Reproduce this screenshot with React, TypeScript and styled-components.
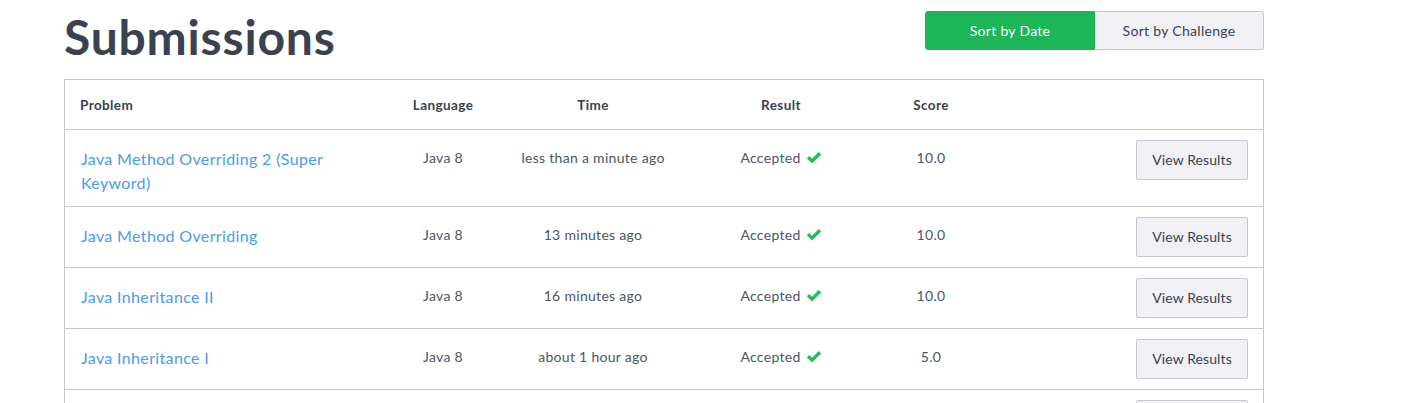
import React from "react";
import styled, { createGlobalStyle } from "styled-components";

const Global = createGlobalStyle`
  html, body { margin: 0; padding: 0; background: #fff; }
  body { font-family: Lato, "Open Sans", sans-serif; color: #39424e; }
  * { box-sizing: border-box; }
`;

const Page = styled.div`
  padding-left: 64px;
  width: 1264px;
`;

const Header = styled.div`
  display: flex;
  justify-content: space-between;
  align-items: flex-start;
  height: 79px;
`;

const Title = styled.h1`
  margin: 0;
  padding: 9px 0 0 0;
  font-size: 48px;
  line-height: 56px;
  font-weight: 700;
  letter-spacing: 0.8px;
  color: #39424e;
`;

const Toggle = styled.div`
  display: flex;
  margin-top: 11px;
`;

const ToggleButton = styled.button<{ $active?: boolean; $first?: boolean }>`
  width: ${(p) => (p.$first ? "170px" : "169px")};
  height: 39px;
  font-family: Lato, sans-serif;
  font-size: 14px;
  letter-spacing: 0.3px;
  cursor: pointer;
  border: 1px solid ${(p) => (p.$active ? "#1cb557" : "#c2c7d0")};
  background: ${(p) => (p.$active ? "#1cb557" : "#f0f0f5")};
  color: ${(p) => (p.$active ? "#fff" : "#39424e")};
  border-radius: ${(p) => (p.$first ? "3px 0 0 3px" : "0 3px 3px 0")};
  ${(p) => (p.$first ? "" : "border-left: none;")}
`;

const Table = styled.div`
  border: 1px solid #c2c7d0;
  border-bottom: none;
  width: 1200px;
`;

const Row = styled.div<{ $head?: boolean }>`
  display: grid;
  grid-template-columns: 329px 100px 200px 176px 124px 1fr;
  border-bottom: 1px solid #c2c7d0;
  ${(p) => (p.$head ? "height: 50px; align-items: center;" : "")}
`;

const HeadCell = styled.div<{ $left?: boolean }>`
  font-size: 13.5px;
  font-weight: 700;
  letter-spacing: 0.4px;
  color: #39424e;
  text-align: ${(p) => (p.$left ? "left" : "center")};
  padding: ${(p) => (p.$left ? "0 15px" : "0 2px 0 0")};
`;

const Cell = styled.div`
  padding: 16px 2px 12px 0;
  font-size: 14px;
  letter-spacing: 0.3px;
  line-height: 24px;
  color: #4b5563;
  text-align: center;
  display: flex;
  justify-content: center;
  align-items: flex-start;
  gap: 5px;
`;

const ProblemCell = styled.div`
  padding: 17px 16px 11px;
`;

const ProblemLink = styled.a`
  font-size: 16px;
  letter-spacing: 0.35px;
  line-height: 24px;
  color: #4a9af0;
  text-decoration: none;
`;

const ActionCell = styled.div`
  padding: 10px 15px;
  display: flex;
  justify-content: flex-end;
`;

const ViewButton = styled.button`
  width: 112px;
  height: 40px;
  border: 1px solid #c2c7d0;
  background: #f0f0f5;
  border-radius: 2px;
  font-family: Lato, sans-serif;
  font-size: 14px;
  letter-spacing: 0.1px;
  color: #39424e;
  cursor: pointer;
  padding-bottom: 2px;
`;

const Check = styled.svg`
  width: 16px;
  height: 14px;
  margin-top: 5px;
`;

const CheckIcon = () => (
  <Check viewBox="0 0 16 14">
    <path d="M0.8 7.2 L3.2 4.9 L6 7.7 L12.8 1 L15.2 3.4 L6 12.6 Z" fill="#1cbf5c" />
  </Check>
);

const rows = [
  { name: "Java Method Overriding 2 (Super Keyword)", time: "less than a minute ago", score: "10.0" },
  { name: "Java Method Overriding", time: "13 minutes ago", score: "10.0" },
  { name: "Java Inheritance II", time: "16 minutes ago", score: "10.0" },
  { name: "Java Inheritance I", time: "about 1 hour ago", score: "5.0" },
  { name: "Java Abstract Class", time: "about 1 hour ago", score: "10.0" },
];

export default function App() {
  return (
    <>
      <Global />
      <Page>
        <Header>
          <Title>Submissions</Title>
          <Toggle>
            <ToggleButton $active $first>Sort by Date</ToggleButton>
            <ToggleButton>Sort by Challenge</ToggleButton>
          </Toggle>
        </Header>
        <Table>
          <Row $head>
            <HeadCell $left>Problem</HeadCell>
            <HeadCell>Language</HeadCell>
            <HeadCell>Time</HeadCell>
            <HeadCell>Result</HeadCell>
            <HeadCell>Score</HeadCell>
            <HeadCell />
          </Row>
          {rows.map((r) => (
            <Row key={r.name}>
              <ProblemCell>
                <ProblemLink href="#">{r.name}</ProblemLink>
              </ProblemCell>
              <Cell>Java 8</Cell>
              <Cell>{r.time}</Cell>
              <Cell>
                Accepted <CheckIcon />
              </Cell>
              <Cell>{r.score}</Cell>
              <ActionCell>
                <ViewButton>View Results</ViewButton>
              </ActionCell>
            </Row>
          ))}
        </Table>
      </Page>
    </>
  );
}
